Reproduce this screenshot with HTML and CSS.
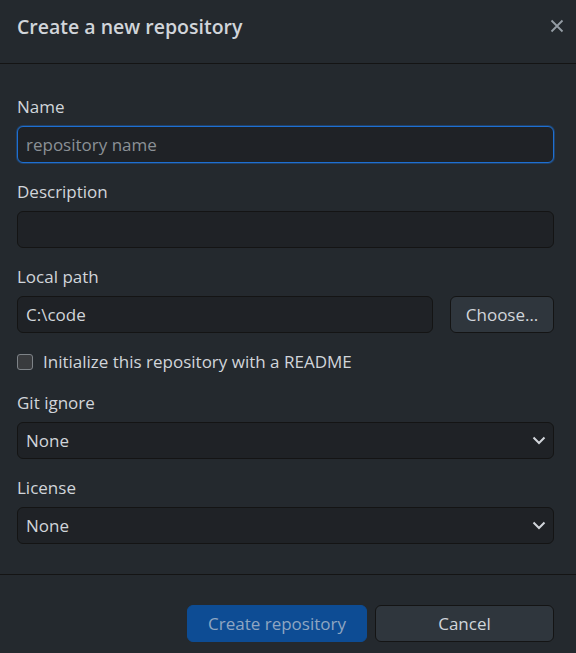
FILE: index.html
```html
<!DOCTYPE html>
<html lang="en">
<head>
<meta charset="utf-8">
<title>Create a new repository</title>
<link rel="stylesheet" href="styles.css">
</head>
<body>
<div class="dialog">
  <header class="dialog-header">
    <h1 class="title">Create a new repository</h1>
    <button class="close" aria-label="Close">
      <svg width="14" height="14" viewBox="0 0 14 14"><path d="M1.5 1.5 L12.5 12.5 M12.5 1.5 L1.5 12.5" stroke="#959da5" stroke-width="1.8" fill="none"/></svg>
    </button>
  </header>
  <main class="dialog-content">
    <div class="field">
      <label class="label">Name</label>
      <div class="input focused"><span class="placeholder">repository name</span></div>
    </div>
    <div class="field">
      <label class="label">Description</label>
      <div class="input"></div>
    </div>
    <div class="field">
      <label class="label">Local path</label>
      <div class="path-row">
        <div class="input grow"><span class="value">C:\code</span></div>
        <button class="btn choose">Choose…</button>
      </div>
    </div>
    <div class="check-row">
      <span class="checkbox"></span>
      <span class="check-label">Initialize this repository with a README</span>
    </div>
    <div class="field">
      <label class="label">Git ignore</label>
      <div class="input select"><span class="value">None</span>
        <svg class="chev" width="14" height="9" viewBox="0 0 14 9"><path d="M1.5 1.5 L7 7 L12.5 1.5" stroke="#d1d5da" stroke-width="2" fill="none"/></svg>
      </div>
    </div>
    <div class="field">
      <label class="label">License</label>
      <div class="input select"><span class="value">None</span>
        <svg class="chev" width="14" height="9" viewBox="0 0 14 9"><path d="M1.5 1.5 L7 7 L12.5 1.5" stroke="#d1d5da" stroke-width="2" fill="none"/></svg>
      </div>
    </div>
  </main>
  <footer class="dialog-footer">
    <button class="btn primary">Create repository</button>
    <button class="btn cancel">Cancel</button>
  </footer>
</div>
</body>
</html>
```

FILE: styles.css
```css
html, body {
  margin: 0;
  padding: 0;
  background: #24292e;
}
body {
  font-family: "Open Sans", "Noto Sans", sans-serif;
  color: #d1d5da;
  font-size: 17px;
}
.dialog {
  width: 576px;
  height: 653px;
  background: #24292e;
  display: flex;
  flex-direction: column;
  overflow: hidden;
}
.dialog-header {
  height: 63px;
  border-bottom: 1px solid #141414;
  display: flex;
  align-items: center;
  justify-content: space-between;
  padding: 0 12px 0 17px;
  box-sizing: content-box;
}
.title {
  margin: 0 0 10px 0;
  font-size: 19.5px;
  font-weight: 600;
  color: #d1d5da;
  line-height: 1;
}
.close {
  background: none;
  border: none;
  padding: 0;
  width: 14px;
  height: 14px;
  margin-bottom: 11px;
  display: flex;
  align-items: center;
  justify-content: center;
}
.dialog-content {
  padding: 33px 22px 30px 17px;
  display: flex;
  flex-direction: column;
  gap: 19px;
  border-bottom: 1px solid #141414;
}
.field {
  display: flex;
  flex-direction: column;
}
.label {
  line-height: 20px;
  margin-bottom: 9px;
  font-size: 17px;
}
.input {
  height: 37px;
  box-sizing: border-box;
  background: #1f2226;
  border: 1px solid #141414;
  border-radius: 6px;
  padding: 0 8px;
  display: flex;
  align-items: center;
  line-height: 20px;
}
.input.focused {
  border-color: #1e6fd1;
  box-shadow: 0 0 0 1px rgba(30, 111, 209, 0.35);
}
.placeholder {
  color: #8b9196;
}
.value {
  color: #d1d5da;
}
.path-row {
  display: flex;
  gap: 17px;
}
.grow {
  flex: 1;
}
.btn {
  font-family: inherit;
  font-size: 17px;
  height: 37px;
  box-sizing: border-box;
  border: 1px solid #141414;
  border-radius: 6px;
  background: #2f363d;
  color: #d1d5da;
  padding: 0;
  flex: none;
}
.choose {
  width: 104px;
}
.check-row {
  display: flex;
  align-items: center;
  height: 20px;
  gap: 10px;
  margin-bottom: 2px;
}
.checkbox {
  width: 16px;
  height: 16px;
  box-sizing: border-box;
  border: 1px solid #7e8388;
  border-radius: 3px;
  background: #393b3e;
}
.check-label {
  line-height: 20px;
}
.select {
  justify-content: space-between;
  padding-right: 7px;
}
.dialog-footer {
  padding: 30px 22px 0 0;
  display: flex;
  justify-content: flex-end;
  gap: 8px;
}
.primary {
  width: 180px;
  background: #0d4c94;
  border-color: #0d4c94;
  color: #8fa6c2;
}
.cancel {
  width: 179px;
}
```
